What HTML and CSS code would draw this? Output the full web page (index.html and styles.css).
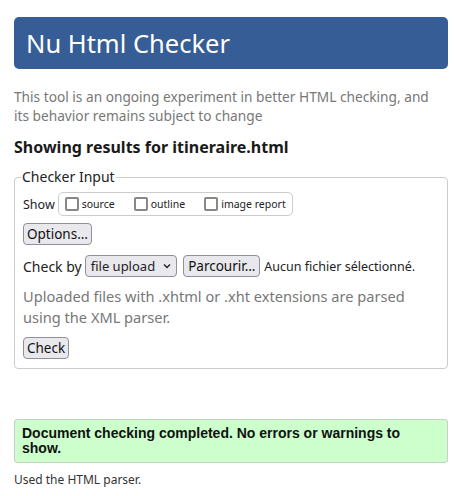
FILE: index.html
```html
<!DOCTYPE html>
<html lang="en">
<head>
<meta charset="utf-8">
<title>Nu Html Checker</title>
<link rel="stylesheet" href="styles.css">
</head>
<body>
<h1 class="title">Nu Html Checker</h1>
<p class="intro">This tool is an ongoing experiment in better HTML checking, and its behavior remains subject to change</p>
<p class="results-for">Showing results for itineraire.html</p>
<fieldset class="input">
  <legend>Checker Input</legend>
  <div class="show-row">
    <span>Show</span>
    <span class="show-group">
      <label class="opt"><span class="box"></span>source</label>
      <label class="opt"><span class="box"></span>outline</label>
      <label class="opt"><span class="box"></span>image report</label>
    </span>
  </div>
  <div class="row"><button class="btn">Options…</button></div>
  <div class="checkby">
    <span class="cb-label">Check by</span>
    <span class="select">file upload <svg width="10" height="8" viewBox="0 0 10 8"><path d="M2 2.5 L5 5.5 L8 2.5" fill="none" stroke="#222" stroke-width="1.4"/></svg></span>
    <button class="btn browse">Parcourir…</button>
    <span class="nofile">Aucun fichier sélectionné.</span>
  </div>
  <p class="note">Uploaded files with .xhtml or .xht extensions are parsed using the XML parser.</p>
  <div class="row row-check"><button class="btn">Check</button></div>
</fieldset>
<p class="success">Document checking completed. No errors or warnings to show.</p>
<p class="meta">Used the HTML parser.</p>
<p class="meta">Total execution time: 30 milliseconds.</p>
</body>
</html>
```
FILE: styles.css
```css
html, body { margin: 0; padding: 0; background: #fff; }
body {
  padding: 17px 7px 0 14px;
  font-family: "Noto Sans", "Open Sans", sans-serif;
  color: #222;
}
.title {
  margin: 0;
  background: #365d95;
  color: #fff;
  font-weight: 400;
  font-size: 25.5px;
  line-height: 30px;
  padding: 11px 12px 11px 12px;
  border-radius: 5px;
}
.intro {
  margin: 18px 0 0 0;
  padding-right: 12px;
  color: #777;
  font-size: 13.7px;
  line-height: 19px;
}
.results-for {
  margin: 12px 0 0 0;
  font-weight: 700;
  font-size: 16px;
  line-height: 20px;
  color: #1a1a1a;
}
.input {
  margin: 11px 0 0 0;
  border: 1px solid #ccc;
  border-radius: 4px;
  padding: 0 8px 9px 8px;
  min-width: 0;
}
.input legend {
  font-size: 14px;
  line-height: 18px;
  padding: 0 1px;
  margin-left: -2px;
}
.show-row {
  display: flex;
  align-items: center;
  gap: 3px;
  font-size: 12.5px;
  margin-top: 6px;
}
.show-group {
  display: inline-flex;
  align-items: center;
  border: 1px solid #ccc;
  border-radius: 5px;
  padding: 2px 6px 2px 6px;
  gap: 19px;
  font-size: 10.5px;
  height: 18px;
}
.opt { display: inline-flex; align-items: center; gap: 3px; }
.box {
  width: 10px; height: 10px;
  border: 2px solid #888;
  border-radius: 2px;
  background: #fff;
}
.row { margin-top: 6px; }
.row-check { margin-top: 8px; }
.btn {
  font-family: inherit;
  font-size: 13.5px;
  line-height: 18px;
  color: #111;
  background: #e9e9ed;
  border: 1px solid #8f8f9d;
  border-radius: 4px;
  padding: 1px 3px;
  margin: 0;
}
.checkby {
  display: flex;
  align-items: center;
  margin-top: 10px;
  font-size: 14px;
}
.cb-label { margin-right: 3px; }
.select {
  display: inline-flex;
  align-items: center;
  gap: 7px;
  font-size: 13px;
  line-height: 18px;
  background: #e9e9ed;
  border: 1px solid #8f8f9d;
  border-radius: 4px;
  padding: 1px 4px 1px 5px;
  margin-right: 6px;
}
.browse { padding: 1px 4px; margin-right: 4px; font-size: 13.5px; }
.nofile { font-size: 12.5px; }
.note {
  margin: 9px 0 0 0;
  color: #777;
  font-size: 14.6px;
  line-height: 21px;
}
.success {
  margin: 50px 0 0 0;
  background: #ccffcc;
  border: 1px solid #ccc;
  border-radius: 3px;
  padding: 6px 7px 6px 7px;
  font-family: "Liberation Sans", Arial, sans-serif;
  font-weight: 700;
  font-size: 14px;
  line-height: 15px;
  color: #111;
}
.meta {
  margin: 8px 0 0 0;
  font-size: 12px;
  line-height: 17px;
  color: #333;
}
```
